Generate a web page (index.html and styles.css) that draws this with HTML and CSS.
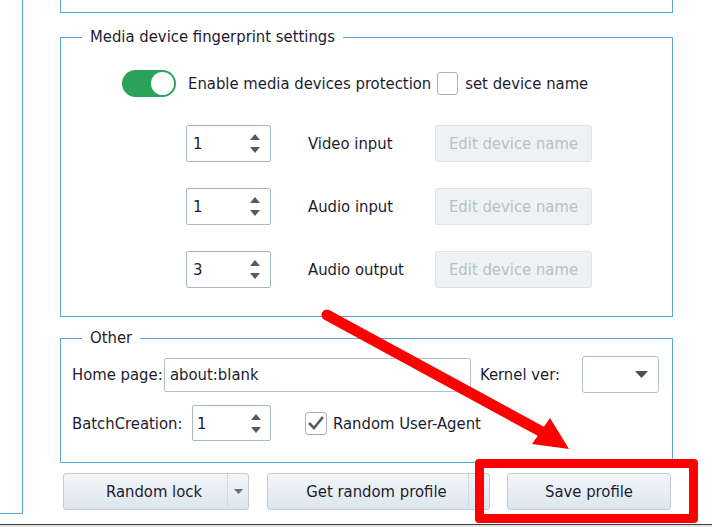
FILE: index.html
```html
<!DOCTYPE html>
<html lang="en">

<head>
    <meta charset="utf-8">
    <title>Profile settings</title>
    <link rel="stylesheet" href="styles.css">
</head>

<body>
    <div class="window">
        <div class="sidepanel"></div>
        <div class="content">
            <div class="topbox"></div>

            <fieldset class="group media">
                <legend>Media device fingerprint settings</legend>
                <div class="toggle_row">
                    <span class="toggle"><span class="knob"></span></span>
                    <span class="label">Enable media devices protection</span>
                    <span class="checkbox"></span>
                    <span class="label">set device name</span>
                </div>
                <div class="device_list">
                    <div class="device_row">
                        <div class="spin"><span class="value">1</span>
                            <span class="arrows">
                                <svg width="10" height="6" viewBox="0 0 10 6"><path d="M0 6 L5 0 L10 6 Z" fill="#5a5a5a"/></svg>
                                <svg width="10" height="6" viewBox="0 0 10 6"><path d="M0 0 L5 6 L10 0 Z" fill="#5a5a5a"/></svg>
                            </span>
                        </div>
                        <span class="device_name">Video input</span>
                        <button class="edit" disabled>Edit device name</button>
                    </div>
                    <div class="device_row">
                        <div class="spin"><span class="value">1</span>
                            <span class="arrows">
                                <svg width="10" height="6" viewBox="0 0 10 6"><path d="M0 6 L5 0 L10 6 Z" fill="#5a5a5a"/></svg>
                                <svg width="10" height="6" viewBox="0 0 10 6"><path d="M0 0 L5 6 L10 0 Z" fill="#5a5a5a"/></svg>
                            </span>
                        </div>
                        <span class="device_name">Audio input</span>
                        <button class="edit" disabled>Edit device name</button>
                    </div>
                    <div class="device_row">
                        <div class="spin"><span class="value">3</span>
                            <span class="arrows">
                                <svg width="10" height="6" viewBox="0 0 10 6"><path d="M0 6 L5 0 L10 6 Z" fill="#5a5a5a"/></svg>
                                <svg width="10" height="6" viewBox="0 0 10 6"><path d="M0 0 L5 6 L10 0 Z" fill="#5a5a5a"/></svg>
                            </span>
                        </div>
                        <span class="device_name">Audio output</span>
                        <button class="edit" disabled>Edit device name</button>
                    </div>
                </div>
            </fieldset>

            <fieldset class="group other">
                <legend>Other</legend>
                <div class="other_row first">
                    <span class="home_label">Home page:</span>
                    <div class="textfield">about:blank</div>
                    <span class="kernel_label">Kernel ver:</span>
                    <div class="combo">
                        <svg width="13" height="7" viewBox="0 0 13 7"><path d="M0 0 L13 0 L6.5 7 Z" fill="#4f4f4f"/></svg>
                    </div>
                </div>
                <div class="other_row second">
                    <span class="batch_label">BatchCreation:</span>
                    <div class="spin small"><span class="value">1</span>
                        <span class="arrows">
                            <svg width="10" height="6" viewBox="0 0 10 6"><path d="M0 6 L5 0 L10 6 Z" fill="#5a5a5a"/></svg>
                            <svg width="10" height="6" viewBox="0 0 10 6"><path d="M0 0 L5 6 L10 0 Z" fill="#5a5a5a"/></svg>
                        </span>
                    </div>
                    <span class="checkbox checked">
                        <svg width="18" height="16" viewBox="0 0 18 16"><path d="M2 8 L7 13 L16 2" fill="none" stroke="#5c5c5c" stroke-width="2.6"/></svg>
                    </span>
                    <span class="label">Random User-Agent</span>
                </div>
            </fieldset>

            <div class="actions">
                <div class="btn split lock">
                    <span class="btn_text">Random lock</span>
                    <span class="drop"><svg width="9" height="5" viewBox="0 0 9 5"><path d="M0 0 L9 0 L4.5 5 Z" fill="#6a6a6a"/></svg></span>
                </div>
                <div class="btn split random">
                    <span class="btn_text">Get random profile</span>
                    <span class="drop"><svg width="9" height="5" viewBox="0 0 9 5"><path d="M0 0 L9 0 L4.5 5 Z" fill="#6a6a6a"/></svg></span>
                </div>
                <div class="btn save">Save profile</div>
            </div>
        </div>
    </div>
    <div class="taskbar"></div>

    <!-- annotation drawn on top of the screenshot -->
    <svg class="annotation" width="712" height="527" viewBox="0 0 712 527">
        <line x1="327" y1="315" x2="544" y2="433" stroke="#ff0000" stroke-width="11" stroke-linecap="round"/>
        <path d="M532 444 L550 418 L569 449 Z" fill="#ff0000"/>
    </svg>
    <div class="highlight"></div>
</body>

</html>
```

FILE: styles.css
```css
* {
    box-sizing: border-box;
}

body {
    margin: 0;
    width: 712px;
    height: 527px;
    overflow: hidden;
    position: relative;
    background: #ffffff;
    font-family: 'DejaVu Sans Condensed', 'DejaVu Sans', sans-serif;
    font-size: 16.5px;
    color: #1c1c30;
}

.window {
    display: flex;
    height: 524px;
}

.sidepanel {
    width: 23px;
    height: 514px;
    border-right: 1px solid #5aa6d9;
    border-bottom: 1px solid #5aa6d9;
}

.content {
    margin-left: 37px;
    width: 613px;
}

.topbox {
    height: 13px;
    border: 1px solid #5aa6d9;
    border-top: none;
}

/*Group boxes*/
.group {
    margin: 0;
    padding: 0;
    border: 1px solid #5aa6d9;
    min-width: 0;
}

.group legend {
    margin-left: 21px;
    padding: 0 8px;
    line-height: 20px;
}

.media {
    margin-top: 14px;
    padding-bottom: 28px;
}

.other {
    margin-top: 11px;
    padding-bottom: 21px;
}

.label {
    white-space: nowrap;
}

.toggle_row {
    display: flex;
    align-items: center;
    height: 27px;
    margin-top: 23px;
    padding-left: 61px;
}

.toggle {
    width: 54px;
    height: 27px;
    border-radius: 14px;
    background: #29a35a;
    display: flex;
    justify-content: flex-end;
    align-items: center;
    padding-right: 2px;
    margin-right: 12px;
}

.knob {
    width: 23px;
    height: 23px;
    border-radius: 50%;
    background: #ffffff;
}

.checkbox {
    width: 21px;
    height: 23px;
    border: 1px solid #a9b2ba;
    border-radius: 3px;
    background: #ffffff;
    margin: 0 7px 0 6px;
    display: flex;
    align-items: center;
    justify-content: center;
}

.device_list {
    display: flex;
    flex-direction: column;
    gap: 26px;
    margin-top: 28px;
    padding-left: 125px;
}

.device_row {
    display: flex;
    align-items: center;
    height: 37px;
}

.spin {
    width: 85px;
    height: 37px;
    border: 1px solid #a9b7c3;
    border-radius: 2px;
    display: flex;
    align-items: center;
    justify-content: space-between;
    padding: 0 10px 0 6px;
}

.spin .arrows {
    display: flex;
    flex-direction: column;
    gap: 7px;
}

.spin .arrows svg {
    display: block;
}

.device_name {
    width: 164px;
    padding-left: 37px;
    white-space: nowrap;
}

.edit {
    width: 157px;
    height: 37px;
    border: 1px solid #dde3e8;
    border-radius: 3px;
    background: #eef2f5;
    color: #b7bfc7;
    font-family: inherit;
    font-size: 16.5px;
    padding: 0;
}

/*Other*/
.other_row {
    display: flex;
    align-items: center;
    padding-left: 11px;
}

.other_row.first {
    height: 37px;
    margin-top: 8px;
}

.other_row.second {
    height: 36px;
    margin-top: 12px;
}

.home_label {
    width: 92px;
}

.textfield {
    width: 307px;
    height: 34px;
    border: 1px solid #b3c0cb;
    border-radius: 2px;
    padding: 6px 5px;
}

.kernel_label {
    width: 111px;
    padding-left: 9px;
}

.combo {
    width: 77px;
    height: 37px;
    border: 1px solid #b3c0cb;
    border-radius: 3px;
    display: flex;
    align-items: center;
    justify-content: flex-end;
    padding-right: 10px;
}

.batch_label {
    width: 120px;
}

.spin.small {
    width: 79px;
    height: 36px;
    padding-left: 4px;
    padding-right: 9px;
}

.checkbox.checked {
    width: 22px;
    height: 23px;
    margin: 0 6px 0 34px;
}

/*Buttons*/
.actions {
    display: flex;
    margin-top: 10px;
    padding-left: 3px;
}

.btn {
    height: 37px;
    border: 1px solid #c3ccd4;
    border-radius: 3px;
    background: linear-gradient(#f2f6f9, #dde6ee);
    display: flex;
    align-items: center;
    justify-content: center;
    white-space: nowrap;
}

.split {
    justify-content: space-between;
}

.split .btn_text {
    flex: 1;
    text-align: center;
    padding-left: 17px;
}

.split .drop {
    width: 21px;
    height: 100%;
    border-left: 1px solid #d3dbe2;
    display: flex;
    align-items: center;
    justify-content: center;
}

.lock {
    width: 186px;
}

.random {
    width: 223px;
    margin-left: 18px;
}

.save {
    width: 164px;
    margin-left: 17px;
}

.taskbar {
    height: 3px;
    border-top: 1px solid #3a3a3a;
    background: #e2e2e2;
}

/*Annotation*/
.annotation {
    position: absolute;
    top: 0;
    left: 0;
    pointer-events: none;
}

.highlight {
    position: absolute;
    left: 475px;
    top: 459px;
    width: 223px;
    height: 64px;
    border: 9px solid #ff0000;
    border-radius: 4px;
}
```
